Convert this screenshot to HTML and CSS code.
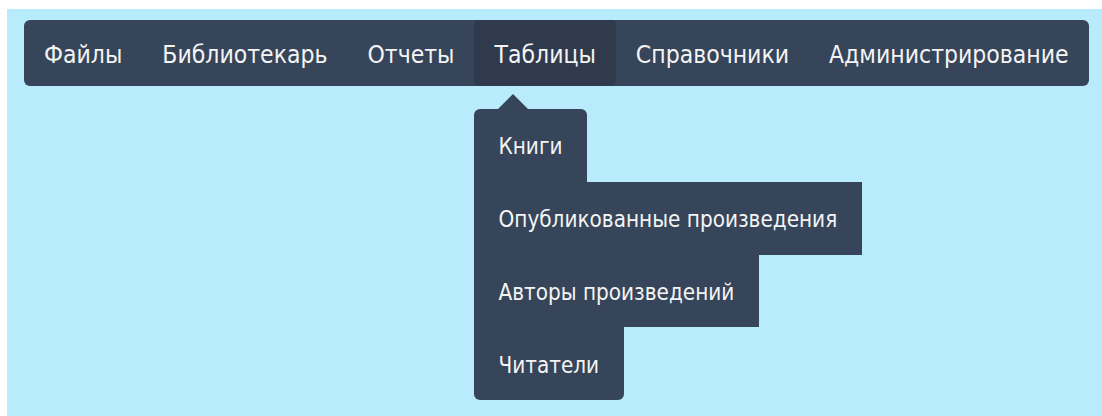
FILE: index.html
```html
<!DOCTYPE html>
<html lang="ru">
<head>
<meta charset="utf-8">
<title>Библиотека</title>
<link rel="stylesheet" href="styles.css">
</head>
<body>
<div class="page">
  <nav class="menubar">
    <div class="menu-item">Файлы</div>
    <div class="menu-item">Библиотекарь</div>
    <div class="menu-item">Отчеты</div>
    <div class="menu-item menu-item--open">
      Таблицы
      <ul class="submenu">
        <li class="submenu-item">Книги</li>
        <li class="submenu-item">Опубликованные произведения</li>
        <li class="submenu-item">Авторы произведений</li>
        <li class="submenu-item">Читатели</li>
      </ul>
    </div>
    <div class="menu-item">Справочники</div>
    <div class="menu-item">Администрирование</div>
  </nav>
</div>
</body>
</html>
```
FILE: styles.css
```css
html, body {
  margin: 0;
  background: #ffffff;
}

.page {
  margin: 9px 0 0 7px;
  height: 407px;
  padding: 11px 0 0 17px;
  box-sizing: border-box;
  background: #b8ebfc;
  font-family: "DejaVu Sans Condensed", "DejaVu Sans", sans-serif;
  color: #f4f4f4;
}

.menubar {
  display: inline-flex;
  height: 66px;
  background: #364559;
  border-radius: 6px;
}

.menu-item {
  position: relative;
  display: flex;
  align-items: center;
  padding: 2px 20px 0;
  font-size: 24.5px;
  white-space: nowrap;
  border-radius: 5px;
}

.menu-item--open {
  background: #2f3b4c;
}

.submenu {
  position: absolute;
  top: calc(100% + 23px);
  left: 0;
  margin: 0;
  padding: 0;
  list-style: none;
  display: flex;
  flex-direction: column;
  align-items: flex-start;
}

/* pointer above the first entry */
.submenu::before {
  content: "";
  position: absolute;
  top: -15px;
  left: 24px;
  border-left: 15.5px solid transparent;
  border-right: 15.5px solid transparent;
  border-bottom: 15px solid #364559;
}

.submenu-item {
  display: flex;
  align-items: center;
  height: 72.75px;
  padding: 2px 25px 0 24px;
  box-sizing: border-box;
  font-size: 22.3px;
  white-space: nowrap;
  background: #364559;
}

.submenu-item:first-child {
  border-radius: 6px 6px 0 0;
}

.submenu-item:last-child {
  border-radius: 0 0 6px 6px;
}
```
